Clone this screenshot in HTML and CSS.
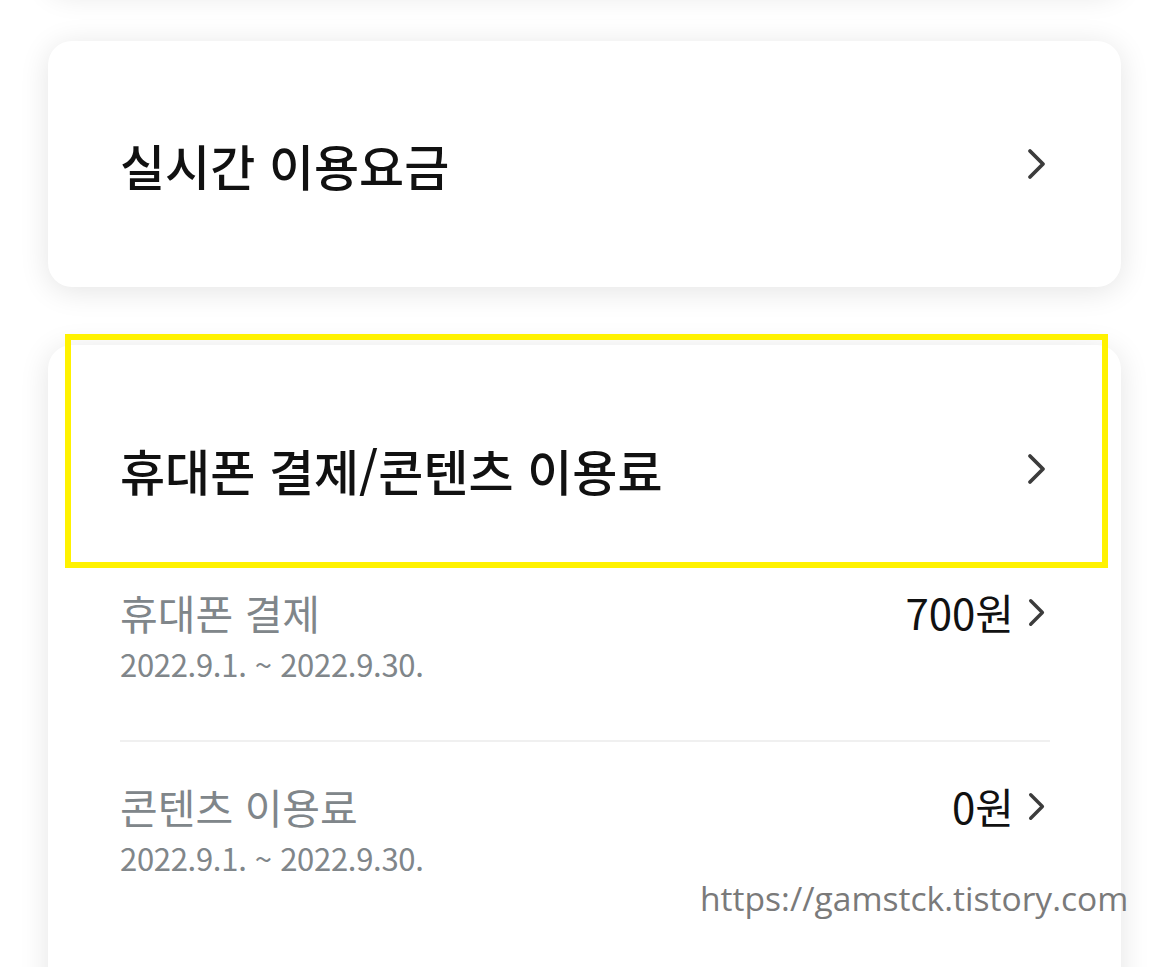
FILE: index.html
```html
<!DOCTYPE html>
<html lang="ko">
<head>
  <meta charset="UTF-8">
  <meta name="viewport" content="width=device-width, initial-scale=1.0">
  <title>이용요금</title>
  <link rel="stylesheet" href="styles.css">
</head>
<body>

  <div class="page">
    <div class="card card-prev"></div>

    <a class="card card-link" href="#">
      <span class="card-title">실시간 이용요금</span>
      <svg class="chevron" viewBox="0 0 20 32"><path d="M3 3 L16 16 L3 29"/></svg>
    </a>

    <div class="card card-bill">
      <div class="highlight"></div>

      <a class="bill-head" href="#">
        <span class="card-title">휴대폰 결제/콘텐츠 이용료</span>
        <svg class="chevron" viewBox="0 0 20 32"><path d="M3 3 L16 16 L3 29"/></svg>
      </a>

      <a class="bill-row" href="#">
        <div class="bill-info">
          <div class="bill-name">휴대폰 결제</div>
          <div class="bill-date">2022.9.1. ~ 2022.9.30.</div>
        </div>
        <div class="bill-amount">
          700원
          <svg class="chevron small" viewBox="0 0 20 32"><path d="M3 3 L16 16 L3 29"/></svg>
        </div>
      </a>

      <a class="bill-row last" href="#">
        <div class="bill-info">
          <div class="bill-name">콘텐츠 이용료</div>
          <div class="bill-date">2022.9.1. ~ 2022.9.30.</div>
        </div>
        <div class="bill-amount">
          0원
          <svg class="chevron small" viewBox="0 0 20 32"><path d="M3 3 L16 16 L3 29"/></svg>
        </div>
      </a>
    </div>
  </div>

  <div class="watermark">https://gamstck.tistory.com</div>

</body>
</html>
```

FILE: styles.css
```css
body {
  margin: 0;
  background-color: #fff;
  font-family: "Noto Sans CJK KR", "Noto Sans", sans-serif;
  color: #111;
  height: 967px;
  overflow: hidden;
  position: relative;
}

a {
  color: inherit;
  text-decoration: none;
}

.page {
  padding: 0 49px 0 48px;
}

.card {
  background-color: #fff;
  border-radius: 24px;
  box-shadow: 0 4px 30px rgba(0, 0, 0, 0.11);
}

.card-prev {
  height: 40px;
  margin-top: -50px;
}

.card-link {
  display: flex;
  align-items: center;
  justify-content: space-between;
  height: 246px;
  margin-top: 51px;
  padding: 0 71px 0 72px;
  box-sizing: border-box;
}

.card-title {
  font-size: 49px;
  font-weight: 500;
  color: #111;
}

.chevron {
  width: 20px;
  height: 32px;
  margin-right: 3px;
}

.chevron path {
  fill: none;
  stroke: #3c3c3c;
  stroke-width: 3.8;
  stroke-linecap: round;
  stroke-linejoin: round;
}

.chevron.small {
  width: 18px;
  height: 29px;
  margin-left: 14px;
  margin-right: 4px;
}

.card-bill {
  position: relative;
  margin-top: 58px;
  height: 700px;
  padding: 0 71px 0 72px;
  border-radius: 24px 24px 0 0;
}

.highlight {
  position: absolute;
  left: 17px;
  top: -11px;
  width: 1043px;
  height: 234px;
  border: 6px solid #fff200;
  box-sizing: border-box;
}

.bill-head {
  display: flex;
  align-items: center;
  justify-content: space-between;
  height: 240px;
  padding-top: 4px;
  margin-bottom: -4px;
}

.bill-row {
  display: flex;
  justify-content: space-between;
  align-items: flex-start;
  padding: 0 0 51px;
  border-bottom: 2px solid #f0f0f0;
}

.bill-row.last {
  border-bottom: none;
  padding-top: 37px;
}

.bill-name {
  font-size: 41px;
  line-height: 54px;
  color: #80868a;
}

.bill-date {
  font-size: 31px;
  line-height: 50px;
  color: #80868a;
  letter-spacing: -0.3px;
}

.bill-amount {
  display: flex;
  align-items: center;
  font-size: 42px;
  line-height: 54px;
  color: #111;
}

.watermark {
  position: absolute;
  left: 700px;
  top: 875px;
  font-family: "Open Sans", sans-serif;
  font-size: 33.6px;
  color: #7a7a7a;
}
```
